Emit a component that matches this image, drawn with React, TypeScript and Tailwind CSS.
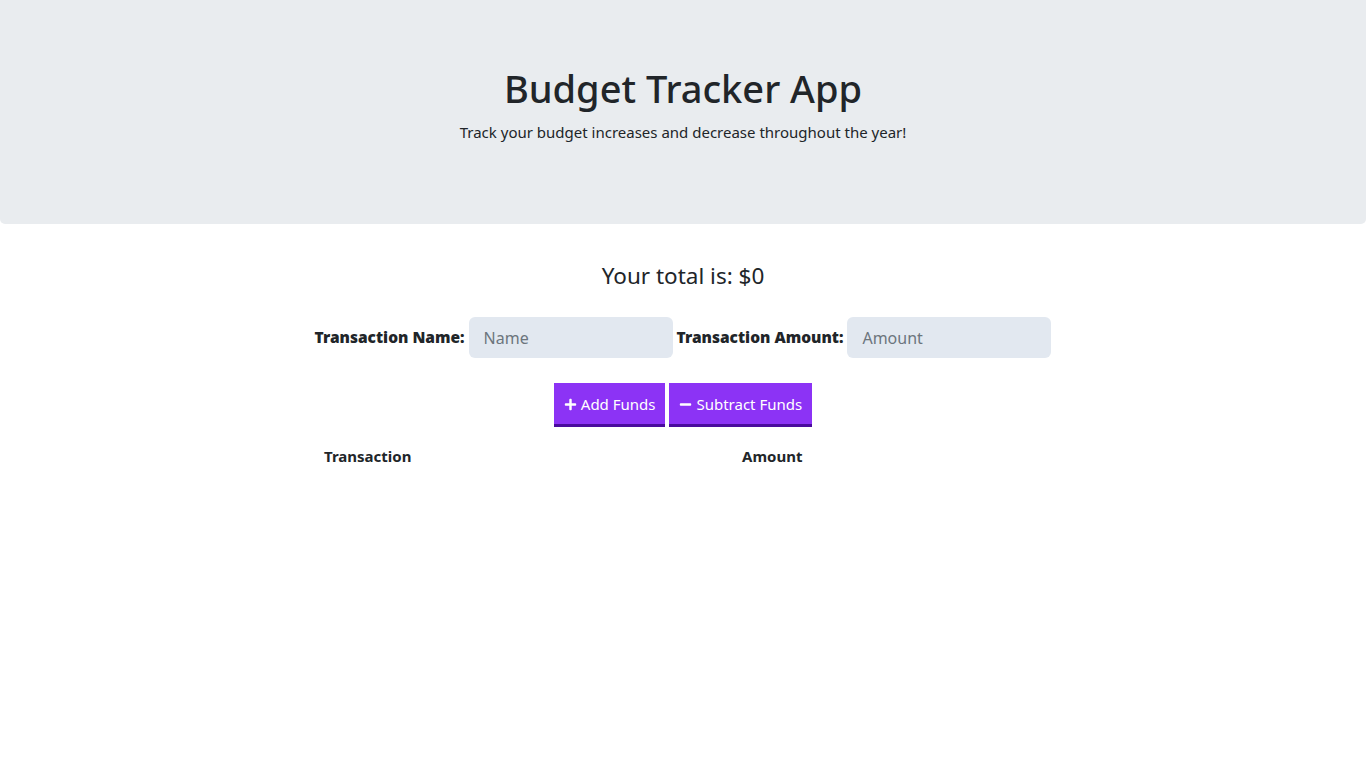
import { FaPlus, FaMinus } from 'react-icons/fa';

const font = { fontFamily: '"Noto Sans", "Open Sans", sans-serif' };

export default function App() {
  return (
    <div className="min-h-screen bg-white text-[#212529]" style={font}>
      <header className="mb-[37px] flex h-[224px] flex-col items-center justify-center rounded-b-[5px] bg-[#e9ecef] px-8">
        <h1 className="mb-2 text-[38px] font-medium leading-[48px]">Budget Tracker App</h1>
        <p className="mb-4 text-[15px] leading-6">Track your budget increases and decrease throughout the year!</p>
      </header>

      <h2 className="text-center text-[22.5px] leading-[29px]">Your total is: $0</h2>

      <form className="mt-[27px] flex items-center justify-center gap-1" onSubmit={(e) => e.preventDefault()}>
        <label htmlFor="name" className="text-[15.5px] font-black">Transaction Name:</label>
        <input
          id="name"
          placeholder="Name"
          className="h-[41px] w-[204px] rounded-md bg-[#e2e8f0] px-[15px] text-[16px] outline-none placeholder:text-[#6c757d]"
        />
        <label htmlFor="amount" className="text-[15.5px] font-black">Transaction Amount:</label>
        <input
          id="amount"
          placeholder="Amount"
          className="h-[41px] w-[204px] rounded-md bg-[#e2e8f0] px-[15px] text-[16px] outline-none placeholder:text-[#6c757d]"
        />
      </form>

      <div className="mt-[25px] flex justify-center gap-1">
        <button className="flex h-[44px] items-center gap-1 border-b-[3px] border-[#4a0b9e] bg-[#8c33f5] px-[10px] pt-[2px] text-[15px] text-white">
          <FaPlus className="h-[13px] w-[13px]" /> Add Funds
        </button>
        <button className="flex h-[44px] items-center gap-1 border-b-[3px] border-[#4a0b9e] bg-[#8c33f5] px-[10px] pt-[2px] text-[15px] text-white">
          <FaMinus className="h-[13px] w-[13px]" /> Subtract Funds
        </button>
      </div>

      <div className="mx-auto mt-[6px] grid w-[742px] grid-cols-[418px_1fr] text-[15px] font-bold">
        <div className="p-3">Transaction</div>
        <div className="p-3">Amount</div>
      </div>
    </div>
  );
}
